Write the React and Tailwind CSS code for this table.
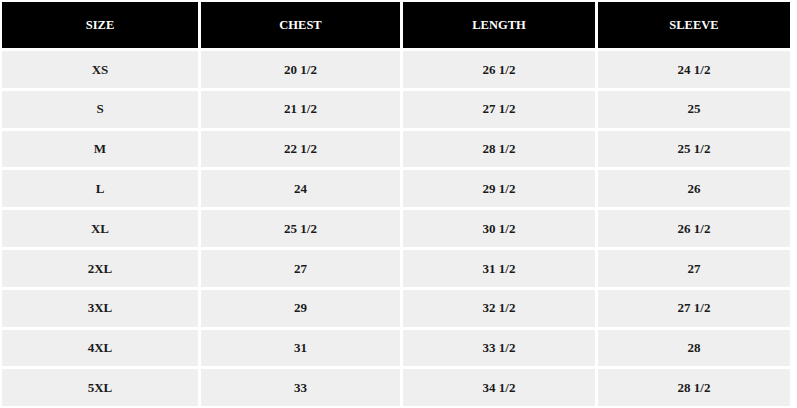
import React from 'react';

const columns = ['SIZE', 'CHEST', 'LENGTH', 'SLEEVE'];

const rows = [
  ['XS', '20 1/2', '26 1/2', '24 1/2'],
  ['S', '21 1/2', '27 1/2', '25'],
  ['M', '22 1/2', '28 1/2', '25 1/2'],
  ['L', '24', '29 1/2', '26'],
  ['XL', '25 1/2', '30 1/2', '26 1/2'],
  ['2XL', '27', '31 1/2', '27'],
  ['3XL', '29', '32 1/2', '27 1/2'],
  ['4XL', '31', '33 1/2', '28'],
  ['5XL', '33', '34 1/2', '28 1/2'],
];

export default function App() {
  return (
    <div className="w-[797px] h-[408px] bg-white overflow-hidden pt-[2px] pl-[2px] font-['Liberation_Serif',serif] text-[13px] font-bold">
      <div className="grid grid-cols-[196px_199px_192px_192px] gap-x-[3px] gap-y-[3px]">
        {columns.map(c => (
          <div key={c} className="h-[46px] bg-black text-white text-[12.5px] flex items-center justify-center">
            {c}
          </div>
        ))}
        {rows.map(r =>
          r.map((v, i) => (
            <div
              key={r[0] + i}
              className="h-[36.8px] bg-[#efefef] text-[#1a1a1a] flex items-center justify-center"
            >
              {v}
            </div>
          ))
        )}
      </div>
    </div>
  );
}
